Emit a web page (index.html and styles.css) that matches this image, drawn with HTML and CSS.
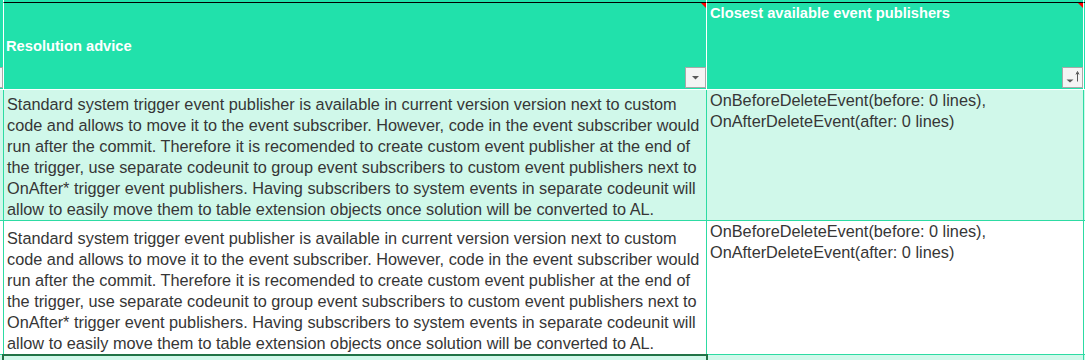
FILE: index.html
```html
<!DOCTYPE html>
<html>
<head>
<meta charset="utf-8">
<link rel="stylesheet" href="styles.css">
</head>
<body>
<div class="sheet">
  <!-- row above header -->
  <div class="cell top-row prev"></div>
  <div class="cell top-row sep"></div>
  <div class="cell top-row sep"></div>
  <div class="cell top-row sep"></div>

  <!-- header row -->
  <div class="cell head prev">
    <span class="filter-btn"></span>
  </div>
  <div class="cell head sep head-center">
    <span class="head-text">Resolution advice</span>
    <span class="note-mark"></span>
    <span class="filter-btn">
      <svg width="19" height="19" viewBox="0 0 19 19"><polygon points="6,8 13,8 9.5,11.5" fill="#595959"/></svg>
    </span>
  </div>
  <div class="cell head sep head-top">
    <span class="head-text">Closest available event publishers</span>
    <span class="note-mark"></span>
    <span class="filter-btn">
      <svg width="19" height="19" viewBox="0 0 19 19"><polygon points="3.5,11.5 10.5,11.5 7,14.5" fill="#595959"/><path d="M14.5 4.5 V13.5" stroke="#595959" stroke-width="1"/><path d="M13 6.5 L14.5 3.5 L16 6.5" fill="none" stroke="#595959" stroke-width="1"/></svg>
    </span>
  </div>
  <div class="cell head sep"></div>

  <!-- data row 1 -->
  <div class="cell data mint prev"></div>
  <div class="cell data mint sep advice">
    <div class="lines">Standard system trigger event publisher is available in current version version next to custom<br>code and allows to move it to the event subscriber. However, code in the event subscriber would<br>run after the commit. Therefore it is recomended to create custom event publisher at the end of<br>the trigger, use separate codeunit to group event subscribers to custom event publishers next to<br>OnAfter* trigger event publishers. Having subscribers to system events in separate codeunit will<br>allow to easily move them to table extension objects once solution will be converted to AL.</div>
  </div>
  <div class="cell data mint sep publishers">
    <div class="lines">OnBeforeDeleteEvent(before: 0 lines),<br>OnAfterDeleteEvent(after: 0 lines)</div>
  </div>
  <div class="cell data mint sep"></div>

  <!-- data row 2 -->
  <div class="cell data white prev"></div>
  <div class="cell data white sep advice">
    <div class="lines">Standard system trigger event publisher is available in current version version next to custom<br>code and allows to move it to the event subscriber. However, code in the event subscriber would<br>run after the commit. Therefore it is recomended to create custom event publisher at the end of<br>the trigger, use separate codeunit to group event subscribers to custom event publishers next to<br>OnAfter* trigger event publishers. Having subscribers to system events in separate codeunit will<br>allow to easily move them to table extension objects once solution will be converted to AL.</div>
  </div>
  <div class="cell data white sep publishers">
    <div class="lines">OnBeforeDeleteEvent(before: 0 lines),<br>OnAfterDeleteEvent(after: 0 lines)</div>
  </div>
  <div class="cell data white sep"></div>

  <!-- data row 3 (partially visible) -->
  <div class="cell last mint prev"></div>
  <div class="cell last mint sep"></div>
  <div class="cell last mint sep"></div>
  <div class="cell last mint sep"></div>

  <div class="selection"></div>
</div>
</body>
</html>
```
FILE: styles.css
```css
* {
  box-sizing: border-box;
}

html, body {
  margin: 0;
  padding: 0;
  background: #ffffff;
}

.sheet {
  position: relative;
  width: 1085px;
  height: 360px;
  overflow: hidden;
  display: grid;
  grid-template-columns: 3px 703px 377px 2px;
  grid-template-rows: 2px 88px 131px 134px 1fr;
  font-family: "Liberation Sans", Arial, sans-serif;
}

.cell {
  position: relative;
  overflow: hidden;
  white-space: nowrap;
}

.top-row {
  background: #21e1ab;
}

.top-row.sep {
  border-left: 1px solid #ffffff;
}

.head {
  background: #21e1ab;
  border-bottom: 1px solid #ffffff;
}

.head.sep {
  border-left: 1px solid #ffffff;
  border-top: 1px solid #000000;
}

.head-text {
  color: #ffffff;
  font-weight: bold;
  font-size: 14.7px;
  line-height: 17px;
}

.head-center {
  display: flex;
  align-items: center;
  padding-left: 2px;
  padding-top: 1px;
}

.head-top {
  padding-left: 3px;
  padding-top: 1px;
}

.note-mark {
  position: absolute;
  top: -1px;
  right: 0;
  width: 6px;
  height: 6px;
  background: #ff0000;
  clip-path: polygon(0 0, 100% 0, 100% 100%);
}

.filter-btn {
  position: absolute;
  right: 0;
  bottom: 1px;
  width: 21px;
  height: 21px;
  background: #f4f4f4;
  border: 1px solid #a9a9a9;
  display: block;
}

.filter-btn svg {
  display: block;
}

.data {
  border-bottom: 1px solid #2ddba3;
  color: #363636;
  font-size: 16.3px;
  line-height: 21px;
}

.data.sep,
.last.sep {
  border-left: 1px solid #2ddba3;
}

.mint {
  background: #d0f8ea;
}

.white {
  background: #ffffff;
}

.advice {
  display: flex;
  flex-direction: column;
  justify-content: flex-end;
  padding-left: 3px;
}

.publishers {
  padding-left: 3px;
  padding-top: 0;
}

.selection {
  position: absolute;
  left: 2px;
  top: 354px;
  width: 706px;
  height: 30px;
  border: 2px solid #217346;
}
```
